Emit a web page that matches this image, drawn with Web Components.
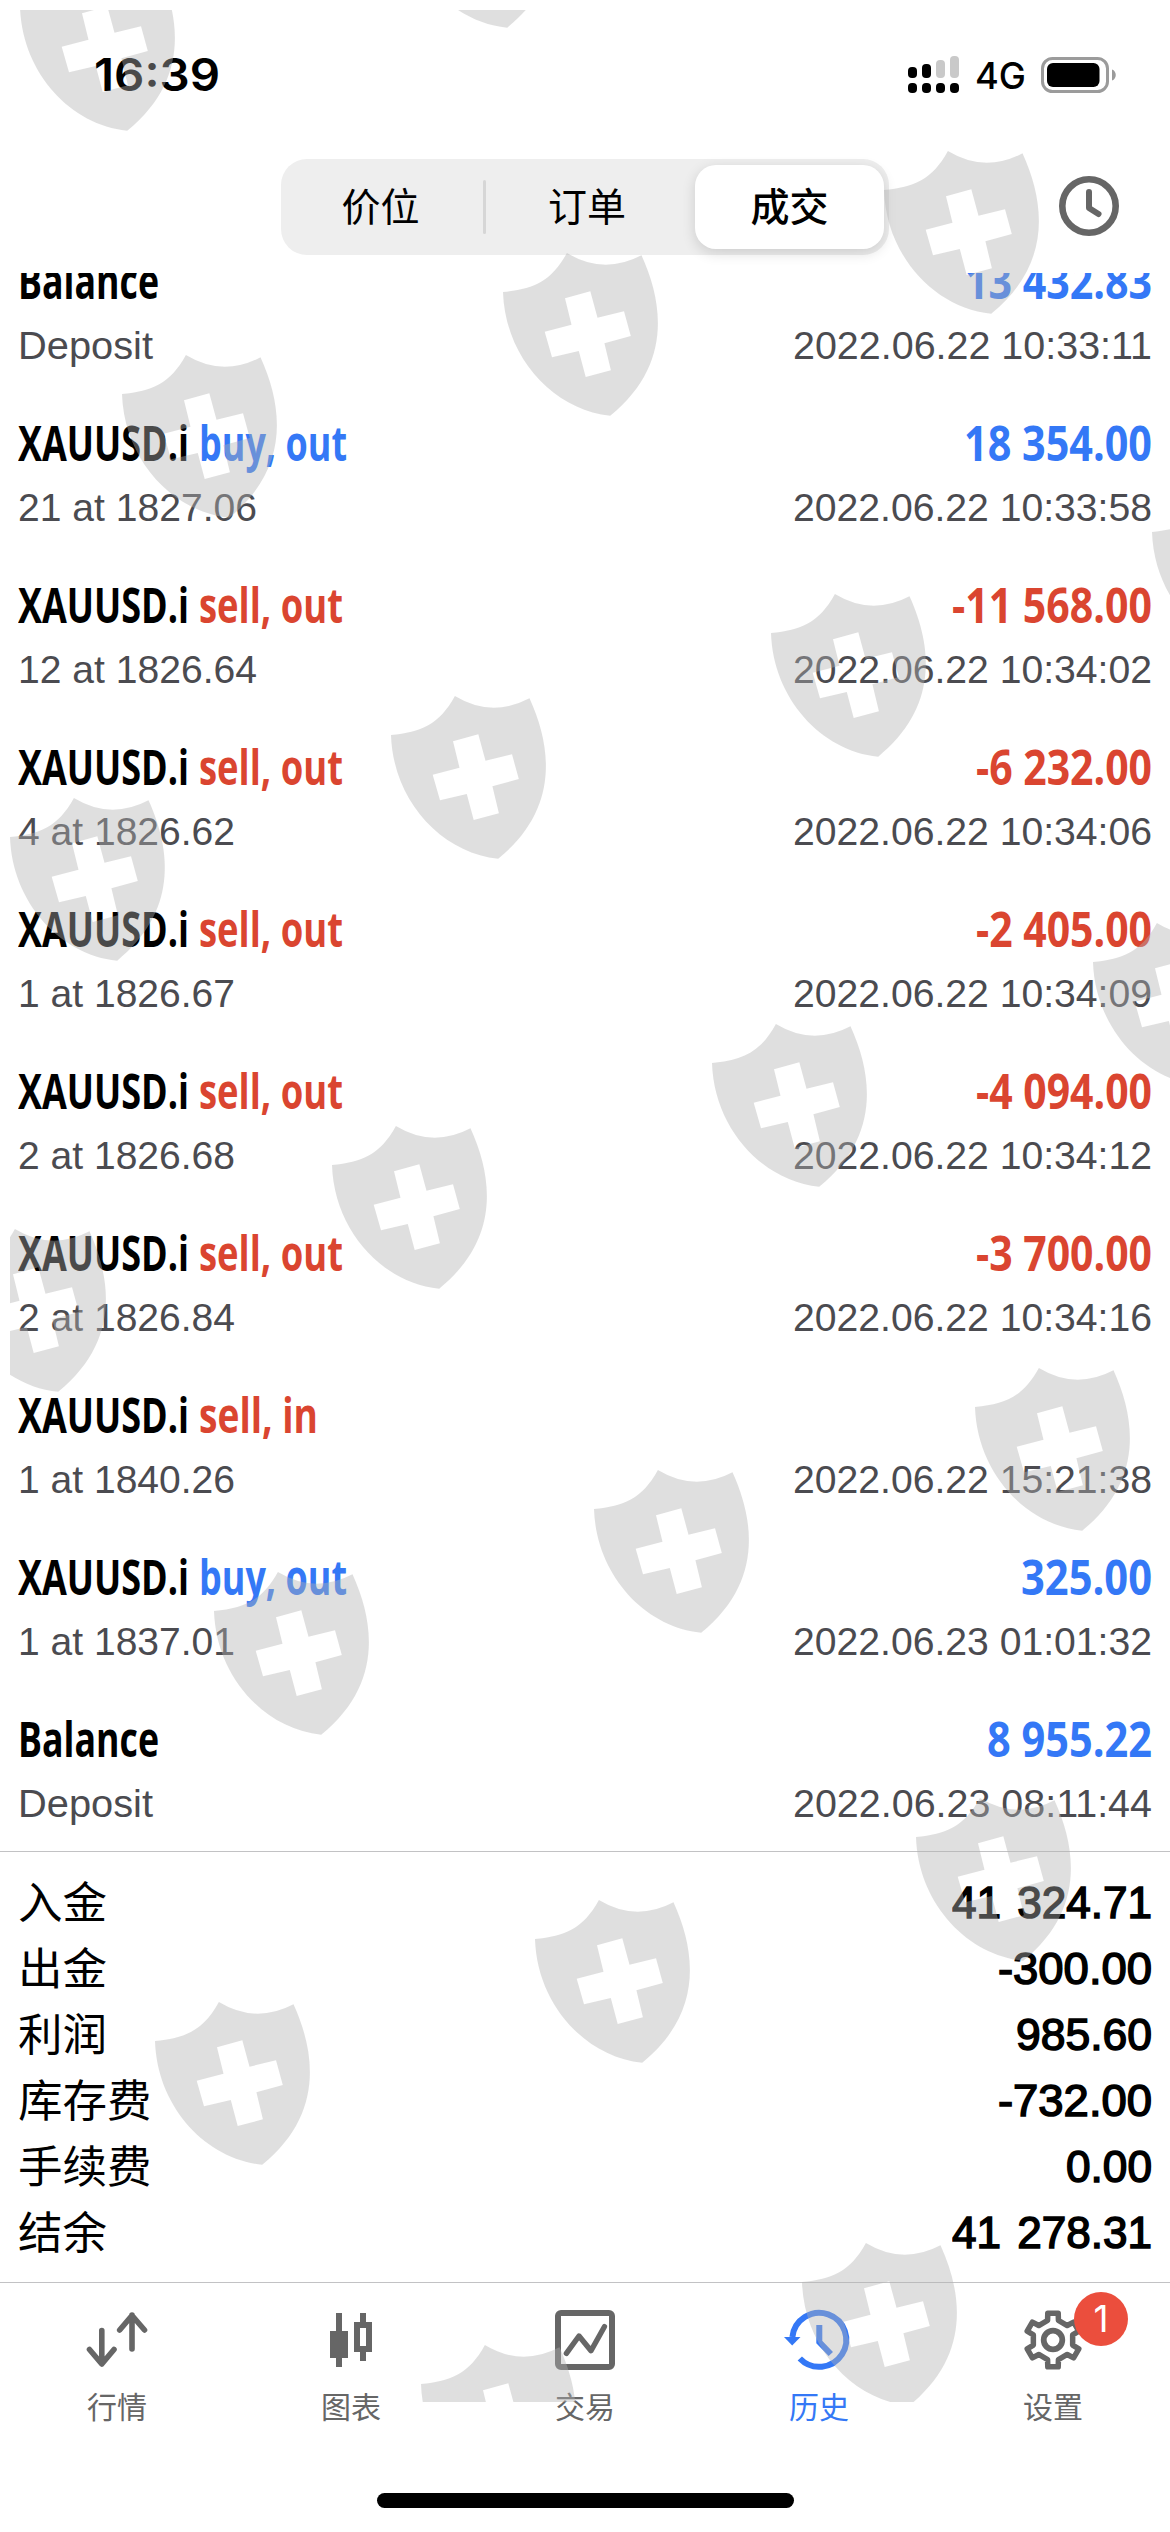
<!DOCTYPE html>
<html lang="zh-CN">
<head>
<meta charset="utf-8">
<title>历史</title>
<style>
  html, body { margin: 0; padding: 0; background: #fff; }
  body { width: 1170px; height: 2532px; overflow: hidden; }
</style>
</head>
<body>
<trade-app></trade-app>

<script>
// Text squeezed (or stretched) horizontally to a given width
class FitText extends HTMLElement {
  constructor() {
    super();
    this.attachShadow({ mode: 'open' });
    this.shadowRoot.innerHTML = /* html */ `
      <style>
        :host { display: block; flex: none; white-space: nowrap; }
        span { display: inline-block; transform-origin: 0 50%; white-space: pre; }
      </style>
      <span><slot></slot></span>
    `;
  }

  connectedCallback() {
    const width = Number(this.getAttribute('width'));
    const span = this.shadowRoot.querySelector('span');
    this.style.width = `${width}px`;
    const natural = span.getBoundingClientRect().width;
    if (natural) span.style.transform = `scaleX(${width / natural})`;
  }
}

class StatusBar extends HTMLElement {
  constructor() {
    super();
    this.attachShadow({ mode: 'open' });
    this.shadowRoot.innerHTML = /* html */ `
      <style>
        :host {
          display: flex;
          justify-content: space-between;
          align-items: center;
          height: 148px;
          padding: 1px 53px 0 94px;
          box-sizing: border-box;
          font-family: Inter, "Liberation Sans", sans-serif;
        }
        .time { font-size: 45px; font-weight: 600; line-height: 60px; }
        .right { display: flex; align-items: center; }
        .net { font-size: 37px; font-weight: 500; line-height: 44px; margin: 2px 15px 0 16px; }
        svg { display: block; }
      </style>
      <fit-text class="time" width="126">16:39</fit-text>
      <div class="right">
        <svg width="51" height="38" viewBox="0 0 51 38">
          <rect x="0" y="11" width="9" height="11" rx="4"/>
          <rect x="14" y="8" width="9" height="14" rx="4"/>
          <rect x="28" y="4" width="9" height="18" rx="4" fill="#c9c9c9"/>
          <rect x="42" y="0" width="9" height="22" rx="4" fill="#c9c9c9"/>
          <rect x="0" y="27" width="9" height="10" rx="4"/>
          <rect x="14" y="27" width="9" height="10" rx="4"/>
          <rect x="28" y="27" width="9" height="10" rx="4"/>
          <rect x="42" y="27" width="9" height="10" rx="4"/>
        </svg>
        <fit-text class="net" width="51">4G</fit-text>
        <svg width="76" height="36" viewBox="0 0 76 36">
          <rect x="1.5" y="1.5" width="65" height="33" rx="10" fill="none" stroke="#9b9b9b" stroke-width="3"/>
          <rect x="6" y="6" width="52.5" height="24" rx="6"/>
          <path d="M71 12.5c5 1.500 5 9.500 0 11z" fill="#9b9b9b"/>
        </svg>
      </div>
    `;
  }
}

class SegmentBar extends HTMLElement {
  constructor() {
    super();
    this.attachShadow({ mode: 'open' });
    this.shadowRoot.innerHTML = /* html */ `
      <style>
        :host {
          display: flex;
          justify-content: space-between;
          height: 125px;
          padding: 11px 51px 0 281px;
          box-sizing: border-box;
          font-family: "Noto Sans CJK SC", sans-serif;
        }
        .segments {
          display: grid;
          grid-template-columns: 202px 3px 205px 189px;
          align-items: center;
          width: 608px;
          height: 96px;
          border-radius: 26px;
          background: #eee;
          box-sizing: border-box;
        }
        .segment {
          text-align: center;
          font-size: 39px;
          line-height: 78px;
          height: 84px;
        }
        .segment:not(.active) { padding-right: 3px; }
        .line { height: 54px; background: #d6d6d6; border-radius: 2px; }
        .active {
          font-weight: 500;
          background: #fff;
          border-radius: 21px;
          margin-left: 4px;
          width: 189px;
          box-shadow: 0 4px 14px rgba(0, 0, 0, 0.14);
        }
        svg { margin: 17px 0 0; display: block; }
      </style>
      <div class="segments">
        <div class="segment">价位</div>
        <div class="line"></div>
        <div class="segment">订单</div>
        <div class="segment active">成交</div>
      </div>
      <svg width="60" height="60" viewBox="0 0 60 60" fill="none" stroke="#666" stroke-linecap="round" stroke-linejoin="round">
        <circle cx="30" cy="30" r="26.700" stroke-width="6.600"/>
        <path d="M30 16v16l9.500 6" stroke-width="6"/>
      </svg>
    `;
  }
}

class DealRow extends HTMLElement {
  constructor() {
    super();
    this.attachShadow({ mode: 'open' });
  }

  static get styles() {
    return /* css */ `
    :host {
      display: block;
      height: 162px;
      padding: 0 18px;
      box-sizing: border-box;
    }

    .line {
      display: flex;
      justify-content: space-between;
    }

    .title {
      font: 700 47.500px/60px "Open Sans", "Noto Sans", sans-serif;
      height: 60px;
      margin-bottom: 10px;
    }

    .names {
      display: flex;
      gap: 10px;
    }

    .info {
      font: 38.500px/50px "Liberation Sans", Arial, sans-serif;
      color: #4b4b50;
    }

    .blue { color: #3478f6; }
    .red { color: #da4530; }
    `;
  }

  connectedCallback() {
    const { symbol, action, color, amount, info, time } = this.deal;
    this.shadowRoot.innerHTML = /* html */ `
      <style>${DealRow.styles}</style>
      <div class="line title">
        <div class="names">
          <fit-text width="${symbol[1]}">${symbol[0]}</fit-text>
          ${action ? `<fit-text class="${color}" width="${action[1]}">${action[0]}</fit-text>` : ''}
        </div>
        ${amount ? `<fit-text class="${color}" width="${amount[1]}">${amount[0]}</fit-text>` : ''}
      </div>
      <div class="line info">
        <fit-text width="${info[1]}">${info[0]}</fit-text>
        <fit-text width="359">${time}</fit-text>
      </div>
    `;
  }
}

class DealList extends HTMLElement {
  constructor() {
    super();
    this.attachShadow({ mode: 'open' });
    this.shadowRoot.innerHTML = /* html */ `
      <style>
        :host { display: block; height: 1578px; overflow: hidden; }
        /* scrolled a little under the header */
        .rows { margin-top: -22px; }
      </style>
      <div class="rows"></div>
    `;
  }

  connectedCallback() {
    const xau = ['XAUUSD.i', 171];
    const balance = ['Balance', 141];
    const buyOut = ['buy, out', 148];
    const sellOut = ['sell, out', 144];
    const deals = [
      { symbol: balance, color: 'blue', amount: ['13 432.83', 187], info: ['Deposit', 135], time: '2022.06.22 10:33:11' },
      { symbol: xau, action: buyOut, color: 'blue', amount: ['18 354.00', 188], info: ['21 at 1827.06', 239], time: '2022.06.22 10:33:58' },
      { symbol: xau, action: sellOut, color: 'red', amount: ['-11 568.00', 200], info: ['12 at 1826.64', 239], time: '2022.06.22 10:34:02' },
      { symbol: xau, action: sellOut, color: 'red', amount: ['-6 232.00', 176], info: ['4 at 1826.62', 217], time: '2022.06.22 10:34:06' },
      { symbol: xau, action: sellOut, color: 'red', amount: ['-2 405.00', 176], info: ['1 at 1826.67', 217], time: '2022.06.22 10:34:09' },
      { symbol: xau, action: sellOut, color: 'red', amount: ['-4 094.00', 176], info: ['2 at 1826.68', 217], time: '2022.06.22 10:34:12' },
      { symbol: xau, action: sellOut, color: 'red', amount: ['-3 700.00', 176], info: ['2 at 1826.84', 217], time: '2022.06.22 10:34:16' },
      { symbol: xau, action: ['sell, in', 119], color: 'red', info: ['1 at 1840.26', 217], time: '2022.06.22 15:21:38' },
      { symbol: xau, action: buyOut, color: 'blue', amount: ['325.00', 131], info: ['1 at 1837.01', 217], time: '2022.06.23 01:01:32' },
      { symbol: balance, color: 'blue', amount: ['8 955.22', 165], info: ['Deposit', 135], time: '2022.06.23 08:11:44' },
    ];
    const rows = this.shadowRoot.querySelector('.rows');
    deals.forEach((deal) => {
      const row = document.createElement('deal-row');
      row.deal = deal;
      rows.appendChild(row);
    });
  }
}

class AccountSummary extends HTMLElement {
  constructor() {
    super();
    this.attachShadow({ mode: 'open' });
    const items = [
      ['入金', '41 324.71', 200],
      ['出金', '-300.00', 154],
      ['利润', '985.60', 136],
      ['库存费', '-732.00', 154],
      ['手续费', '0.00', 86],
      ['结余', '41 278.31', 200],
    ];
    this.shadowRoot.innerHTML = /* html */ `
      <style>
        :host {
          display: block;
          height: 431px;
          box-sizing: border-box;
          border-top: 1px solid #c2c2c4;
          padding: 18px 18px 0;
        }
        .item {
          display: flex;
          justify-content: space-between;
          height: 66px;
          line-height: 66px;
        }
        .label { font-family: "Noto Sans CJK SC", sans-serif; font-size: 44px; line-height: 61px; }
        .value {
          font-family: "Liberation Sans", Arial, sans-serif;
          font-size: 44px;
          word-spacing: 4px;
          -webkit-text-stroke: 1.500px #000;
        }
      </style>
      ${items.map(([label, value, width]) => `
        <div class="item">
          <fit-text class="label" width="${label.length * 44.5}">${label}</fit-text>
          <fit-text class="value" width="${width}">${value}</fit-text>
        </div>
      `).join('')}
    `;
  }
}

class TabItem extends HTMLElement {
  constructor() {
    super();
    this.attachShadow({ mode: 'open' });
  }

  // six teeth around the centre of the 66px box
  static gearPath() {
    const points = [];
    for (let k = 0; k < 6; k++) {
      [[-15.5, 20.3], [-11, 27.3], [11, 27.3], [15.5, 20.3]].forEach(([offset, r]) => {
        const a = (k * 60 - 90 + offset) * Math.PI / 180;
        points.push(`${(33 + r * Math.cos(a)).toFixed(2)} ${(32 + r * Math.sin(a)).toFixed(2)}`);
      });
    }
    return `M${points.join('L')}Z`;
  }

  static get icons() {
    return {
      quotes: '<path d="M17.800 22.500V55M5.500 41.500L17.800 56 30 41.500M48 41V7M35.700 22L48 7.500 60.500 22" stroke-width="5.600" stroke-linecap="round" stroke-linejoin="round"/>',
      charts: '<path d="M21 5v54M45 5v10M45 43v10" stroke-width="6"/><path d="M12 23h18v27H12z" fill="currentColor" stroke="none"/><path d="M39 17h12v24H39z" stroke-width="6"/>',
      trade: '<rect x="6" y="5" width="54" height="54" rx="3" stroke-width="6"/><path d="M14.400 45.300L27 28 39 42.700 52.400 18.700" stroke-width="5.400" stroke-linecap="round" stroke-linejoin="round"/>',
      history: '<path d="M6.400 29A27 27 0 1 1 13.800 50.500M33.300 17v17l11.500 12" stroke-width="6"/><path d="M-2 29h16.500L6.200 37.500z" fill="currentColor" stroke="none"/>',
      settings: `<path d="${TabItem.gearPath()}" stroke-width="5.500" stroke-linejoin="round"/><circle cx="33" cy="32" r="9.300" stroke-width="5.800"/>`,
    };
  }

  connectedCallback() {
    const badge = this.getAttribute('badge');
    this.shadowRoot.innerHTML = /* html */ `
      <style>
        :host {
          display: flex;
          flex-direction: column;
          align-items: center;
          color: #666;
          font-family: "Noto Sans CJK SC", sans-serif;
        }
        :host([active]) { color: #3478f6; }
        .icon { position: relative; width: 66px; height: 66px; }
        svg { display: block; overflow: visible; }
        .label { font-size: 30px; line-height: 40px; margin-top: 11px; }
        .badge {
          position: absolute;
          left: 54px;
          top: -16px;
          width: 54px;
          height: 54px;
          border-radius: 50%;
          background: #eb4e3d;
          color: #fff;
          font: 37px/54px Inter, sans-serif;
          text-align: center;
        }
      </style>
      <div class="icon">
        <svg width="66" height="66" viewBox="0 0 66 66" fill="none" stroke="currentColor">${TabItem.icons[this.getAttribute('icon')]}</svg>
        ${badge ? `<div class="badge">${badge}</div>` : ''}
      </div>
      <div class="label"><slot></slot></div>
    `;
  }
}

class TabBar extends HTMLElement {
  constructor() {
    super();
    this.attachShadow({ mode: 'open' });
    this.shadowRoot.innerHTML = /* html */ `
      <style>
        :host { display: block; border-top: 1px solid #c2c2c4; }
        nav {
          display: grid;
          grid-template-columns: repeat(5, 1fr);
          height: 210px;
          padding-top: 25px;
          box-sizing: border-box;
        }
        .home { width: 417px; height: 15px; border-radius: 8px; background: #000; margin: 0 auto; }
      </style>
      <nav>
        <tab-item icon="quotes">行情</tab-item>
        <tab-item icon="charts">图表</tab-item>
        <tab-item icon="trade">交易</tab-item>
        <tab-item icon="history" active>历史</tab-item>
        <tab-item icon="settings" badge="1">设置</tab-item>
      </nav>
      <div class="home"></div>
    `;
  }
}

// Translucent shields scattered over the whole screen
class ShieldOverlay extends HTMLElement {
  constructor() {
    super();
    this.attachShadow({ mode: 'open' });
    const shields = [
      [20, 7], [400, -96],
      [884, 190], [503, 292], [122, 394],
      [1152, 532], [771, 633], [391, 735], [10, 837],
      [1093, 962], [712, 1063], [332, 1165], [-49, 1268],
      [975, 1407], [594, 1509], [214, 1611],
      [916, 1837], [535, 1939], [155, 2041],
      [802, 2282], [421, 2384],
    ];
    this.shadowRoot.innerHTML = /* html */ `
      <style>
        :host { position: absolute; left: 10px; top: 10px; width: 1160px; height: 2392px; overflow: hidden; pointer-events: none; }
        svg { display: block; }
      </style>
      <svg width="1160" height="2392" viewBox="10 10 1160 2392">
        <defs>
          <path id="shield" fill-rule="evenodd" d="M0 0C30 -3 48 -10 63.900 -39Q100.600 -16.800 138.500 -36.700C162 15 167 75 107.200 123.700C50 118 2 65 0 0Z
            M62 6.300L87.300 -0.700 94.500 25.700 121 19.300 127.800 44 101.400 51.300 107.900 78.300 82.700 85 75.800 59 49 65.300 41.700 39.700 68.500 32.700Z"/>
        </defs>
        <g fill="rgb(178,178,178)" fill-opacity="0.416">
          ${shields.map(([x, y]) => `<use href="#shield" x="${x}" y="${y}"/>`).join('')}
        </g>
      </svg>
    `;
  }
}

class TradeApp extends HTMLElement {
  constructor() {
    super();
    this.attachShadow({ mode: 'open' });
    this.shadowRoot.innerHTML = /* html */ `
      <style>
        :host {
          display: flex;
          flex-direction: column;
          position: relative;
          width: 1170px;
          height: 2532px;
          background: #fff;
          color: #000;
          overflow: hidden;
        }
      </style>
      <status-bar></status-bar>
      <segment-bar></segment-bar>
      <deal-list></deal-list>
      <account-summary></account-summary>
      <tab-bar></tab-bar>
      <shield-overlay></shield-overlay>
    `;
  }
}

customElements.define('fit-text', FitText);
customElements.define('status-bar', StatusBar);
customElements.define('segment-bar', SegmentBar);
customElements.define('deal-row', DealRow);
customElements.define('deal-list', DealList);
customElements.define('account-summary', AccountSummary);
customElements.define('tab-item', TabItem);
customElements.define('tab-bar', TabBar);
customElements.define('shield-overlay', ShieldOverlay);
customElements.define('trade-app', TradeApp);
</script>
</body>
</html>
